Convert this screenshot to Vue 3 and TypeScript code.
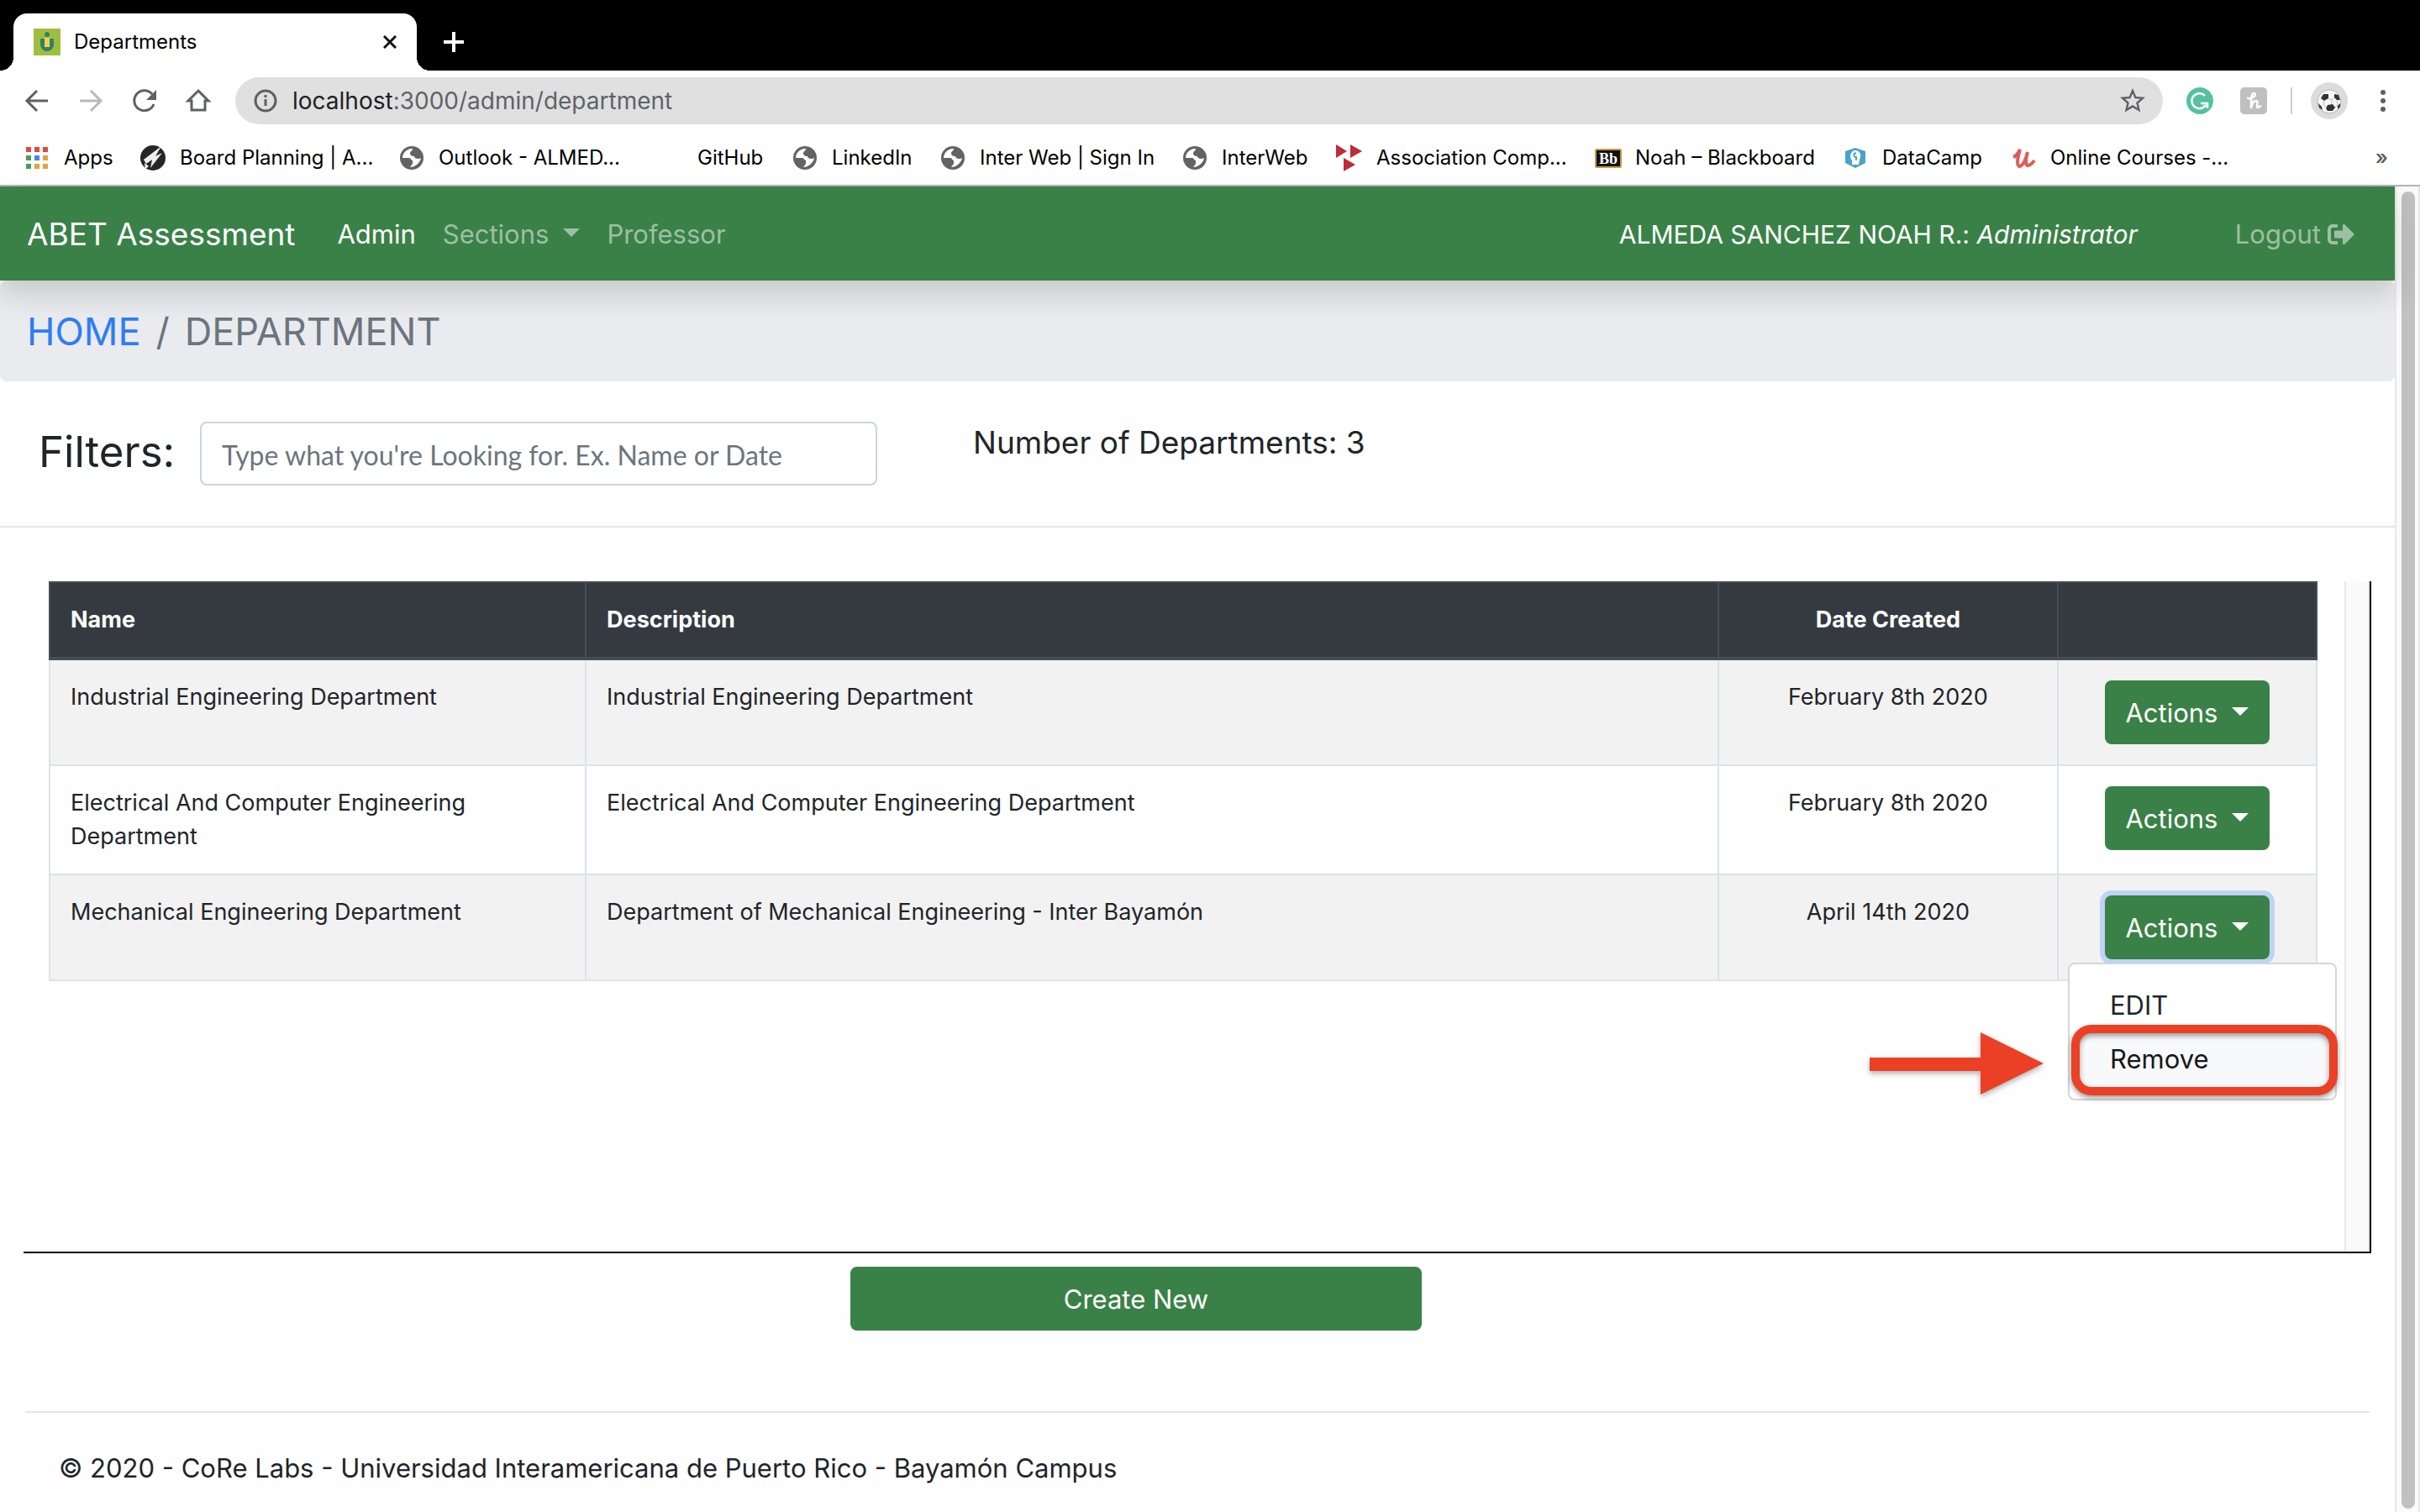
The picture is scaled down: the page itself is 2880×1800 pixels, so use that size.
<script setup lang="ts">
import { ref } from 'vue'

interface Bookmark {
  label: string
  icon: 'apps' | 'board' | 'globe' | 'none' | 'acm' | 'bb' | 'datacamp' | 'udemy'
}

interface Department {
  name: string
  description: string
  created: string
}

const bookmarks: Bookmark[] = [
  { label: 'Apps', icon: 'apps' },
  { label: 'Board Planning | A...', icon: 'board' },
  { label: 'Outlook - ALMED...', icon: 'globe' },
  { label: 'GitHub', icon: 'none' },
  { label: 'LinkedIn', icon: 'globe' },
  { label: 'Inter Web | Sign In', icon: 'globe' },
  { label: 'InterWeb', icon: 'globe' },
  { label: 'Association Comp...', icon: 'acm' },
  { label: 'Noah – Blackboard', icon: 'bb' },
  { label: 'DataCamp', icon: 'datacamp' },
  { label: 'Online Courses -...', icon: 'udemy' },
]

const appColors = ['#e0483e', '#e0483e', '#e0483e', '#4b9a5f', '#4285f4', '#e6a23c', '#4b9a5f', '#e6a23c', '#e6a23c']

const departments: Department[] = [
  {
    name: 'Industrial Engineering Department',
    description: 'Industrial Engineering Department',
    created: 'February 8th 2020',
  },
  {
    name: 'Electrical And Computer Engineering Department',
    description: 'Electrical And Computer Engineering Department',
    created: 'February 8th 2020',
  },
  {
    name: 'Mechanical Engineering Department',
    description: 'Department of Mechanical Engineering - Inter Bayamón',
    created: 'April 14th 2020',
  },
]

const filter = ref('')
const openRow = ref(2)

function toggle(index: number) {
  openRow.value = openRow.value === index ? -1 : index
}
</script>

<template>
  <div class="window">
    <header class="browser">
      <div class="tab-strip">
        <div class="tab">
          <svg class="favicon" viewBox="0 0 32 32" aria-hidden="true">
            <rect width="32" height="32" fill="#9fbe3f" />
            <path d="M8 12h16v7a8 8 0 0 1-16 0z" fill="#33806a" />
            <circle cx="16" cy="7" r="3" fill="#33806a" />
            <rect x="13" y="11" width="6" height="11" fill="#f3d250" />
          </svg>
          <span class="tab-title">Departments</span>
          <button class="icon-button" aria-label="Close tab">
            <svg width="16" height="16" viewBox="0 0 16 16"><path d="M1 1l14 14M15 1L1 15" stroke="#111" stroke-width="3" /></svg>
          </button>
        </div>
        <button class="icon-button new-tab" aria-label="New tab">
          <svg width="24" height="24" viewBox="0 0 24 24"><path d="M12 0v24M0 12h24" stroke="#fff" stroke-width="4" /></svg>
        </button>
      </div>

      <div class="toolbar">
        <button class="icon-button" aria-label="Back">
          <svg width="32" height="32" viewBox="0 0 32 32"><path d="M29 16H5M16 4L4 16l12 12" fill="none" stroke="#5f6062" stroke-width="3" /></svg>
        </button>
        <button class="icon-button" aria-label="Forward">
          <svg width="32" height="32" viewBox="0 0 32 32"><path d="M3 16h24M16 4l12 12-12 12" fill="none" stroke="#b9babb" stroke-width="3" /></svg>
        </button>
        <button class="icon-button" aria-label="Reload">
          <svg width="32" height="32" viewBox="0 0 32 32">
            <path d="M27 20A12 12 0 1 1 25 8" fill="none" stroke="#5f6062" stroke-width="3" />
            <path d="M30 3v12H18z" fill="#5f6062" />
          </svg>
        </button>
        <button class="icon-button" aria-label="Home">
          <svg width="32" height="32" viewBox="0 0 32 32"><path d="M4 16L16 4l12 12h-4v11H8V16z" fill="none" stroke="#5f6062" stroke-width="3" /></svg>
        </button>
        <div class="omnibox">
          <svg width="28" height="28" viewBox="0 0 28 28" aria-hidden="true">
            <circle cx="14" cy="14" r="12" fill="none" stroke="#5f6062" stroke-width="3" />
            <path d="M14 12v8M14 7v3" stroke="#5f6062" stroke-width="3" />
          </svg>
          <span class="url"><span class="host">localhost</span>:3000/admin/department</span>
          <svg width="36" height="36" viewBox="0 0 24 24" aria-hidden="true">
            <path
              fill="#5f6062"
              d="M22 9.240l-7.190-.620L12 2 9.190 8.630 2 9.240l5.460 4.730L5.820 21 12 17.270 18.180 21l-1.630-7.030L22 9.240zM12 15.400l-3.760 2.270 1-4.280-3.320-2.880 4.380-.380L12 6.100l1.710 4.040 4.380.380-3.320 2.880 1 4.280L12 15.400z"
            />
          </svg>
        </div>
        <div class="extensions">
          <svg width="32" height="32" viewBox="0 0 32 32" aria-hidden="true">
            <circle cx="16" cy="16" r="16" fill="#54c29c" />
            <path d="M22 10A9 9 0 1 0 23 21M17 19h8v6" fill="none" stroke="#fff" stroke-width="2.500" />
          </svg>
          <svg width="32" height="32" viewBox="0 0 32 32" aria-hidden="true">
            <rect width="32" height="32" rx="5" fill="#bfbfbf" />
            <path
              d="M9 13c6 1 11-4 8-6-4-1-4 7-4 18 1-6 3-9 6-9 4 1-1 8 2 8 2 0 2-1 3-2"
              fill="none"
              stroke="#fff"
              stroke-width="2.500"
              stroke-linecap="round"
            />
          </svg>
          <span class="divider"></span>
          <svg width="44" height="44" viewBox="0 0 44 44" aria-hidden="true">
            <circle cx="22" cy="22" r="22" fill="#dcdcdc" />
            <circle cx="22" cy="23" r="14" fill="#f6f6f6" stroke="#b5b5b5" />
            <path d="M21 14l-6 0-3 5 4 3 5-3zM28 14l5 1 2 6-4 0-3-3zM20 27l6-1 3 4-3 4-6 0-2-3zM9 25l4 4 1 4-4-3zM35 25l0 4-3 3 0-4z" fill="#333" />
            <path d="M21 19l4 2 3-3M25 21v5M16 22l-1 5 4 3M31 21l1 6-3 3" fill="none" stroke="#bdbdbd" />
          </svg>
          <svg class="kebab" width="8" height="32" viewBox="0 0 8 32" aria-hidden="true">
            <g fill="#5f6062"><circle cx="4" cy="6" r="3" /><circle cx="4" cy="16" r="3" /><circle cx="4" cy="26" r="3" /></g>
          </svg>
        </div>
      </div>

      <nav class="bookmarks" aria-label="Bookmarks">
        <a v-for="mark in bookmarks" :key="mark.label" class="bookmark" href="#">
          <svg width="32" height="32" viewBox="0 0 32 32" aria-hidden="true">
            <template v-if="mark.icon === 'apps'">
              <rect
                v-for="(color, i) in appColors"
                :key="i"
                :x="3 + (i % 3) * 10"
                :y="3 + Math.floor(i / 3) * 10"
                width="6"
                height="6"
                :fill="color"
              />
            </template>
            <template v-else-if="mark.icon === 'board'">
              <circle cx="16" cy="16" r="15" fill="#262626" />
              <path d="M5 18L26 2l-7 12 8-4-14 18 2-10-7 5z" fill="#eee" />
              <path d="M6 22l5 4-4 3z" fill="#fff" />
            </template>
            <template v-else-if="mark.icon === 'globe'">
              <circle cx="16" cy="16" r="14" fill="#636363" />
              <path d="M15 5c-6 1-10 6-10 11h8c2 0 2 3 4 3v4l-3 4c6 0 12-5 13-11-3 2-8 1-8-2-3 0-5-1-5-4 1-3 3-2 3-5z" fill="#fff" />
            </template>
            <template v-else-if="mark.icon === 'acm'">
              <path d="M0 0l13 8L0 16zM17 0l14 8-14 8zM9 16l14 8-14 8z" fill="#bf2b36" />
            </template>
            <template v-else-if="mark.icon === 'bb'">
              <rect x="1" y="6" width="30" height="21" rx="1" fill="#111" stroke="#c89b3c" stroke-width="2" />
              <text x="16" y="23" text-anchor="middle" class="bb">Bb</text>
            </template>
            <template v-else-if="mark.icon === 'datacamp'">
              <path d="M16 4l12 4v14l-12 6-12-6V8z" fill="#4aa3c9" />
              <path d="M12 24v-5c-4-5-1-12 4-12s8 5 5 11l-1 6z" fill="#fff" />
              <path d="M17 10c-4 1-3 5 0 5v4" fill="none" stroke="#4aa3c9" stroke-width="2" />
            </template>
            <template v-else-if="mark.icon === 'udemy'">
              <path d="M4 15c3-1 6-5 8-9-2 7-5 18-1 20 5 0 8-9 10-17-2 7-3 15 0 16 3 0 6-3 8-6" fill="none" stroke="#e05c58" stroke-width="4" />
            </template>
          </svg>
          <span>{{ mark.label }}</span>
        </a>
        <button class="more" aria-label="More bookmarks">»</button>
      </nav>
    </header>

    <div class="viewport">
      <div class="page">
        <nav class="navbar">
          <a class="brand" href="#">ABET Assessment</a>
          <a class="nav-link active" href="#">Admin</a>
          <a class="nav-link" href="#">Sections<span class="caret"></span></a>
          <a class="nav-link" href="#">Professor</a>
          <span class="user">ALMEDA SANCHEZ NOAH R.: <em>Administrator</em></span>
          <a class="nav-link logout" href="#">
            Logout
            <svg width="32" height="32" viewBox="0 0 512 512" aria-hidden="true">
              <path
                fill="currentColor"
                d="M497 273L329 441c-15 15-41 4.500-41-17v-96H152c-13.300 0-24-10.700-24-24v-96c0-13.300 10.700-24 24-24h136V88c0-21.400 25.900-32 41-17l168 168c9.300 9.400 9.300 24.600 0 34zM192 436v-40c0-6.600-5.400-12-12-12H96c-17.700 0-32-14.300-32-32V160c0-17.700 14.300-32 32-32h84c6.600 0 12-5.400 12-12V76c0-6.600-5.400-12-12-12H96c-53 0-96 43-96 96v192c0 53 43 96 96 96h84c6.600 0 12-5.400 12-12z"
              />
            </svg>
          </a>
        </nav>

        <nav class="breadcrumb" aria-label="Breadcrumb">
          <a href="#">HOME</a>
          <span>/</span>
          <span>DEPARTMENT</span>
        </nav>

        <section class="filters">
          <label for="filter">Filters:</label>
          <input id="filter" v-model="filter" type="text" placeholder="Type what you're Looking for. Ex. Name or Date" />
          <p class="count">Number of Departments: {{ departments.length }}</p>
        </section>

        <section class="list">
          <div class="table-area">
            <table>
              <colgroup>
                <col class="col-name" />
                <col class="col-description" />
                <col class="col-date" />
                <col />
              </colgroup>
              <thead>
                <tr>
                  <th>Name</th>
                  <th>Description</th>
                  <th class="center">Date Created</th>
                  <th></th>
                </tr>
              </thead>
              <tbody>
                <tr v-for="(dept, index) in departments" :key="dept.name">
                  <td>{{ dept.name }}</td>
                  <td>{{ dept.description }}</td>
                  <td class="center">{{ dept.created }}</td>
                  <td>
                    <div class="dropdown">
                      <button class="btn" :class="{ focused: openRow === index }" :aria-expanded="openRow === index" @click="toggle(index)">
                        Actions<span class="caret"></span>
                      </button>
                      <div v-if="openRow === index" class="menu">
                        <a class="menu-item" href="#">EDIT</a>
                        <a class="menu-item hovered" href="#">Remove</a>
                        <span class="highlight"></span>
                        <svg class="arrow" width="208" height="76" viewBox="0 0 208 76" aria-hidden="true">
                          <path d="M0 30h132V0l75 37-75 37V46H0z" fill="#ec4026" />
                        </svg>
                      </div>
                    </div>
                  </td>
                </tr>
              </tbody>
            </table>
          </div>
          <div class="gutter"></div>
        </section>

        <div class="create">
          <button class="btn create-btn">Create New</button>
        </div>

        <footer>© 2020 - CoRe Labs - Universidad Interamericana de Puerto Rico - Bayamón Campus</footer>
      </div>
      <div class="scrollbar"><div class="thumb"></div></div>
    </div>
  </div>
</template>

<style>
body {
  margin: 0;
  background: #fefefe;
}
</style>

<style scoped>
.window {
  display: flex;
  flex-direction: column;
  min-height: 100vh;
  font-family: Inter, 'Liberation Sans', sans-serif;
  font-size: 31px;
  line-height: 48px;
  color: #212529;
}

* {
  box-sizing: border-box;
}

a {
  color: inherit;
  text-decoration: none;
}

button,
input {
  font: inherit;
  margin: 0;
}

svg {
  display: block;
  flex: none;
}

.icon-button {
  display: flex;
  padding: 0;
  border: 0;
  background: none;
}

/* Browser chrome */
.browser {
  background: #fff;
  border-bottom: 2px solid #b4b4b4;
  font-size: 24px;
  color: #000;
}

.tab-strip {
  display: flex;
  align-items: center;
  height: 84px;
  padding: 16px 16px 0;
  background: #000;
}

.tab {
  position: relative;
  display: flex;
  align-items: center;
  gap: 16px;
  width: 480px;
  height: 68px;
  padding: 0 24px;
  background: #fff;
  border-radius: 16px 16px 0 0;
}

.tab::before,
.tab::after {
  content: '';
  position: absolute;
  bottom: 0;
  width: 16px;
  height: 16px;
}

.tab::before {
  left: -16px;
  background: radial-gradient(circle at 0 0, #000 16px, #fff 16px);
}

.tab::after {
  right: -16px;
  background: radial-gradient(circle at 100% 0, #000 16px, #fff 16px);
}

.favicon {
  width: 32px;
  height: 32px;
}

.tab-title {
  flex: 1;
}

.new-tab {
  margin-left: 32px;
}

.toolbar {
  display: flex;
  align-items: center;
  gap: 32px;
  padding: 8px 40px 8px 28px;
}

.omnibox {
  display: flex;
  flex: 1;
  align-items: center;
  gap: 18px;
  height: 56px;
  padding: 0 18px 0 22px;
  margin-right: -4px;
  margin-left: -4px;
  border-radius: 28px;
  background: #e0e0e0;
  font-size: 28px;
  color: #5f6368;
}

.url {
  flex: 1;
}

.host {
  color: #202124;
}

.extensions {
  display: flex;
  align-items: center;
  gap: 32px;
}

.divider {
  width: 2px;
  height: 32px;
  margin: 0 -10px 0 -4px;
  background: #cfcfcf;
}

.kebab {
  margin-left: 6px;
}

.bookmarks {
  display: grid;
  grid-template-columns: 138px 308px 308px 160px 176px 288px 184px 308px 294px 200px 1fr auto;
  align-items: center;
  height: 64px;
  padding: 0 38px 0 28px;
}

.bookmark {
  display: flex;
  align-items: center;
  gap: 16px;
  white-space: nowrap;
}

.bb {
  font-family: 'Liberation Serif', serif;
  font-size: 18px;
  font-weight: 700;
  fill: #fff;
}

.more {
  padding: 0;
  border: 0;
  background: none;
  font-weight: 600;
  color: #5f6062;
}

/* Page */
.viewport {
  display: flex;
  flex: 1;
}

.page {
  flex: 1;
  min-width: 0;
}

.scrollbar {
  display: flex;
  width: 30px;
  padding: 6px 4px 16px 6px;
  border: solid #e8e8e8;
  border-width: 0 2px;
  background: #fafafa;
}

.thumb {
  width: 16px;
  border-radius: 8px;
  background: #c1c1c1;
}

.navbar {
  position: relative;
  display: flex;
  align-items: center;
  height: 112px;
  padding: 2px 32px 0;
  background: #3a8147;
  box-shadow: 0 16px 32px rgba(0, 0, 0, 0.15);
  color: #fff;
  white-space: nowrap;
}

.brand {
  margin-right: 34px;
  font-size: 37px;
}

.nav-link {
  display: flex;
  align-items: center;
  padding: 0 16px;
  color: rgba(255, 255, 255, 0.5);
}

.nav-link.active {
  color: #fff;
}

.user {
  margin-left: auto;
  margin-right: 100px;
  font-size: 30px;
}

.logout {
  gap: 8px;
}

.caret {
  display: inline-block;
  margin: 0 0 4px 17px;
  border: 10px solid transparent;
  border-top-color: currentColor;
  border-bottom: 0;
}

.breadcrumb {
  display: flex;
  gap: 18px;
  padding: 25px 32px 23px;
  border-radius: 8px;
  background: #eaebef;
  font-size: 45px;
  line-height: 72px;
  color: #6c757d;
}

.breadcrumb a {
  color: #2f7cf6;
}

.filters {
  display: flex;
  align-items: flex-start;
  height: 174px;
  padding: 48px 46px 0;
  border-bottom: 2px solid #e5e5e5;
}

.filters label {
  width: 192px;
  font-size: 51px;
  line-height: 72px;
}

.filters input {
  width: 806px;
  height: 76px;
  padding: 2px 24px 0;
  border: 2px solid #ced4da;
  border-radius: 8px;
  background: #fff;
  font-family: Lato, sans-serif;
  font-size: 32px;
  color: #495057;
}

.filters input::placeholder {
  color: #6c757d;
  opacity: 1;
}

.count {
  margin: 0 0 0 114px;
  font-size: 37px;
  line-height: 50px;
}

.list {
  display: flex;
  height: 800px;
  margin: 64px 28px 0;
  border: solid #000;
  border-width: 0 2px 2px 0;
}

.table-area {
  flex: 1;
  padding: 0 32px 0 30px;
}

.gutter {
  width: 30px;
  border: solid #e8e8e8;
  border-width: 0 2px;
  background: #fafafa;
}

table {
  width: 100%;
  table-layout: fixed;
  border-collapse: collapse;
  font-size: 27px;
  line-height: 40px;
}

.col-name {
  width: 23.65%;
}

.col-description {
  width: 49.96%;
}

.col-date {
  width: 14.97%;
}

th,
td {
  padding: 24px;
  border: 2px solid #dee2e6;
  text-align: left;
  vertical-align: top;
}

th {
  border-color: #454d55;
  border-bottom-width: 4px;
  background: #343a40;
  color: #fff;
  font-weight: 700;
}

tbody tr:nth-child(odd) {
  background: #f2f2f2;
}

th.center,
td.center {
  text-align: center;
}

.dropdown {
  position: relative;
  width: 196px;
  margin: 0 auto;
}

.btn {
  display: flex;
  align-items: center;
  justify-content: center;
  width: 100%;
  height: 76px;
  padding: 2px 0 0;
  border: 0;
  border-radius: 8px;
  background: #3a8147;
  color: #fff;
  font-size: 31px;
  line-height: 48px;
}

.btn.focused {
  box-shadow: 0 0 0 6px #bfd3f5;
}

.menu {
  position: absolute;
  top: 80px;
  left: -44px;
  z-index: 1;
  width: 320px;
  padding: 17px 0 15px;
  border: 2px solid #d5d6d7;
  border-radius: 8px;
  background: #fff;
  font-size: 31px;
  line-height: 48px;
}

.menu-item {
  display: block;
  padding: 8px 48px;
}

.menu-item.hovered {
  background: #f8f9fa;
  color: #16181b;
}

.highlight {
  position: absolute;
  top: 72px;
  left: 2px;
  width: 317px;
  height: 84px;
  border: 10px solid #ec4026;
  border-radius: 24px;
  filter: drop-shadow(0 3px 3px rgba(0, 0, 0, 0.4));
}

.arrow {
  position: absolute;
  top: 81px;
  right: calc(100% + 30px);
  filter: drop-shadow(0 3px 3px rgba(0, 0, 0, 0.3));
}

.create {
  padding: 16px 146px 0 0;
}

.create-btn {
  width: 680px;
  margin: 0 auto;
}

footer {
  margin: 96px 30px 0;
  padding: 42px 40px 40px;
  border-top: 2px solid #e5e5e5;
}
</style>
